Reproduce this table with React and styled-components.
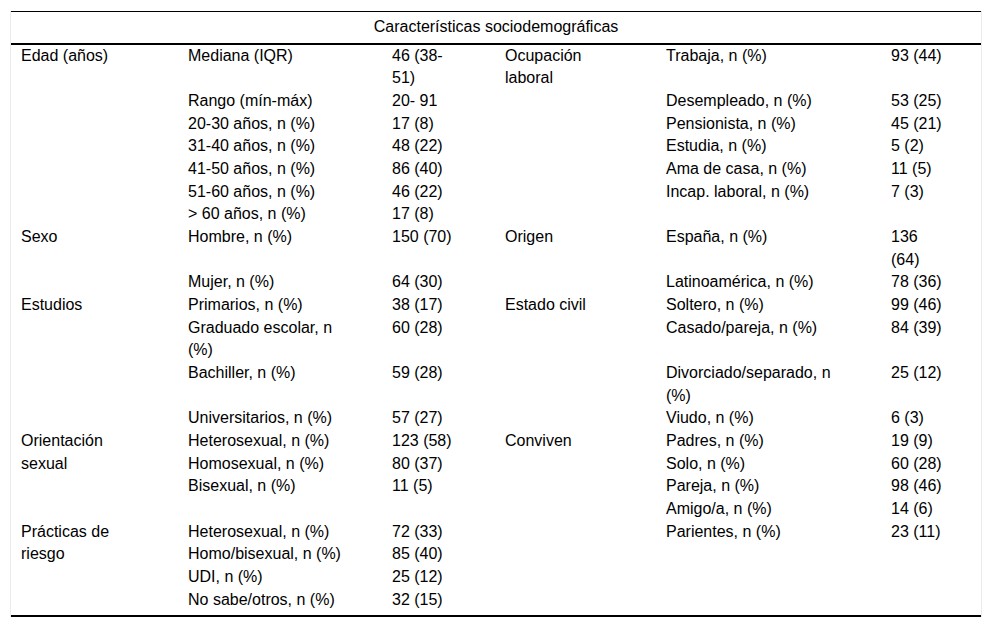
import React from "react";
import styled, { createGlobalStyle } from "styled-components";

const GlobalStyle = createGlobalStyle`
  html, body {
    margin: 0;
    padding: 0;
    background: #fff;
  }
  body {
    font-family: "Liberation Sans", Arial, sans-serif;
    color: #000;
  }
`;

const Frame = styled.div`
  margin: 11px 0 0 10px;
  width: 970px;
  border-left: 1px solid #ebebeb;
  border-right: 1px solid #ebebeb;
`;

const Table = styled.table`
  width: 970px;
  table-layout: fixed;
  border-collapse: collapse;
  border-top: 1px solid #000;
  border-bottom: 2px solid #000;
  font-size: 16px;
  line-height: 22.67px;

  tbody tr:last-child td {
    padding-bottom: 4px;
  }
`;

const HeadCell = styled.th`
  font-weight: normal;
  text-align: center;
  padding: 3.7px 10px 4.3px;
  border-bottom: 2px solid #000;
`;

const Cell = styled.td`
  vertical-align: top;
  text-align: left;
  padding: 0 35px 0 10px;
`;

// widths taken from the column starts in the reference
const columns = [167, 204, 113, 161, 225, 100];

// each row: left group [label?, item, value], right group [label?, item, value]
// a label is { text, span } and is only given on the first row of its group
const rows = [
  [{ text: "Edad (años)", span: 7 }, "Mediana (IQR)", "46 (38-51)", { text: "Ocupación laboral", span: 7 }, "Trabaja, n (%)", "93 (44)"],
  [null, "Rango (mín-máx)", "20- 91", null, "Desempleado, n (%)", "53 (25)"],
  [null, "20-30 años, n (%)", "17 (8)", null, "Pensionista, n (%)", "45 (21)"],
  [null, "31-40 años, n (%)", "48 (22)", null, "Estudia, n (%)", "5 (2)"],
  [null, "41-50 años, n (%)", "86 (40)", null, "Ama de casa, n (%)", "11 (5)"],
  [null, "51-60 años, n (%)", "46 (22)", null, "Incap. laboral, n (%)", "7 (3)"],
  [null, "> 60 años, n (%)", "17 (8)", null, "", ""],
  [{ text: "Sexo", span: 2 }, "Hombre, n (%)", "150 (70)", { text: "Origen", span: 2 }, "España, n (%)", "136 (64)"],
  [null, "Mujer, n (%)", "64 (30)", null, "Latinoamérica, n (%)", "78 (36)"],
  [{ text: "Estudios", span: 4 }, "Primarios, n (%)", "38 (17)", { text: "Estado civil", span: 4 }, "Soltero, n (%)", "99 (46)"],
  [null, "Graduado escolar, n (%)", "60 (28)", null, "Casado/pareja, n (%)", "84 (39)"],
  [null, "Bachiller, n (%)", "59 (28)", null, "Divorciado/separado, n (%)", "25 (12)"],
  [null, "Universitarios, n (%)", "57 (27)", null, "Viudo, n (%)", "6 (3)"],
  [{ text: "Orientación sexual", span: 4 }, "Heterosexual, n (%)", "123 (58)", { text: "Conviven", span: 8 }, "Padres, n (%)", "19 (9)"],
  [null, "Homosexual, n (%)", "80 (37)", null, "Solo, n (%)", "60 (28)"],
  [null, "Bisexual, n (%)", "11 (5)", null, "Pareja, n (%)", "98 (46)"],
  [null, "", "", null, "Amigo/a, n (%)", "14 (6)"],
  [{ text: "Prácticas de riesgo", span: 4 }, "Heterosexual, n (%)", "72 (33)", null, "Parientes, n (%)", "23 (11)"],
  [null, "Homo/bisexual, n (%)", "85 (40)", null, "", ""],
  [null, "UDI, n (%)", "25 (12)", null, "", ""],
  [null, "No sabe/otros, n (%)", "32 (15)", null, "", ""],
];

const Label = ({ label }) =>
  label ? <Cell rowSpan={label.span}>{label.text}</Cell> : null;

export default function App() {
  return (
    <>
      <GlobalStyle />
      <Frame>
        <Table>
          <colgroup>
            {columns.map((w, i) => (
              <col key={i} style={{ width: w }} />
            ))}
          </colgroup>
          <thead>
            <tr>
              <HeadCell colSpan={6}>Características sociodemográficas</HeadCell>
            </tr>
          </thead>
          <tbody>
            {rows.map((r, i) => (
              <tr key={i}>
                <Label label={r[0]} />
                <Cell>{r[1]}</Cell>
                <Cell>{r[2]}</Cell>
                <Label label={r[3]} />
                <Cell>{r[4]}</Cell>
                <Cell>{r[5]}</Cell>
              </tr>
            ))}
          </tbody>
        </Table>
      </Frame>
    </>
  );
}
